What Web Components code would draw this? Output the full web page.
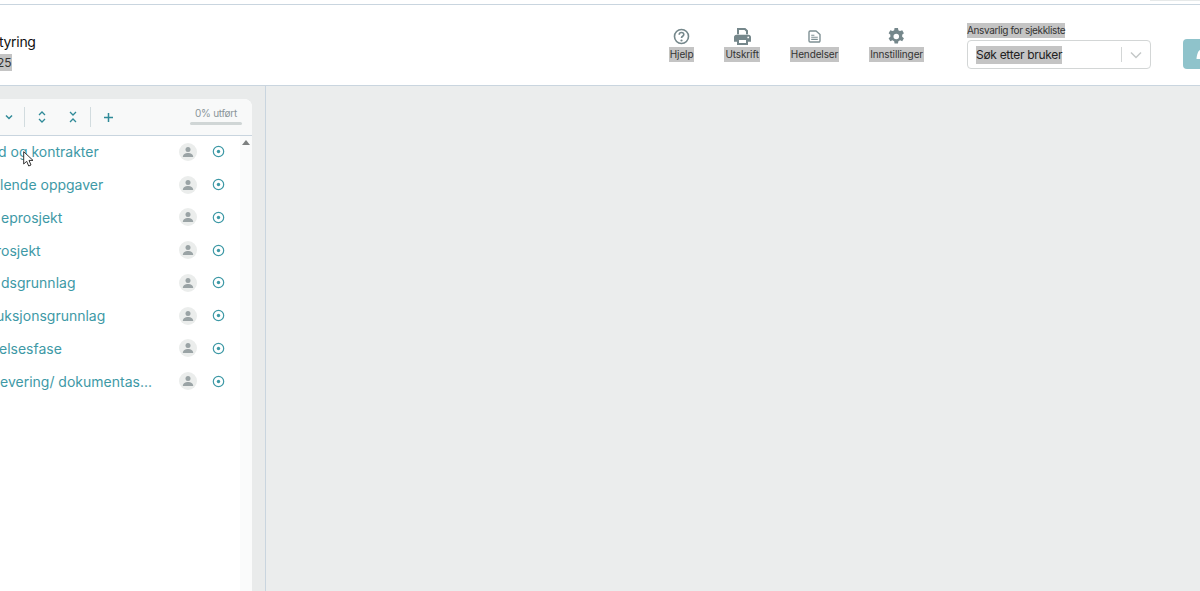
<!DOCTYPE html>
<html lang="no">
<head>
<meta charset="utf-8">
<title>Sjekkliste</title>
<style>
  html, body { margin: 0; height: 100%; overflow: hidden; background: #fff; }
  body { font-family: Inter, "Liberation Sans", sans-serif; }
</style>
</head>
<body>
<checklist-app>
  <app-header slot="header">
    <span slot="title">tyring</span>
    <span slot="sub">25</span>
    <header-action label="Hjelp" icon="help"></header-action>
    <header-action label="Utskrift" icon="print"></header-action>
    <header-action label="Hendelser" icon="doc"></header-action>
    <header-action label="Innstillinger" icon="gear"></header-action>
  </app-header>
  <check-panel slot="panel">
    <check-row style="--indent:-2px">d og kontrakter</check-row>
    <check-row>lende oppgaver</check-row>
    <check-row style="--indent:1px">eprosjekt</check-row>
    <check-row style="--indent:-4px">rosjekt</check-row>
    <check-row style="--indent:1px">dsgrunnlag</check-row>
    <check-row style="--indent:-4px">uksjonsgrunnlag</check-row>
    <check-row style="--indent:-1px">elsesfase</check-row>
    <check-row>evering/ dokumentas...</check-row>
  </check-panel>
</checklist-app>

<script>
// Small helper, every component just sets its shadow markup once
var makeShadow = (el, html) => {
  el.attachShadow({ mode: 'open' });
  el.shadowRoot.innerHTML = html;
};

const ICONS = {
  help: `<svg width="17" height="17" viewBox="0 0 17 17" fill="none"><circle cx="8.5" cy="8.5" r="7" stroke="#75878b" stroke-width="1.6"/><path d="M6.2 6.7c0-1.400 1-2.200 2.300-2.200s2.300.8 2.300 2.100c0 1.700-2.300 1.600-2.300 3.300" stroke="#75878b" stroke-width="1.6"/><circle cx="8.500" cy="12.500" r="1.100" fill="#75878b"/></svg>`,
  print: `<svg width="17" height="17" viewBox="0 0 17 17"><path fill="#75878b" d="M3 0h8.300L14 2.600V6.200h-2V3.400L10.500 2H5v4.200H3zM2.400 6.800h12.200c1.300 0 2.400 1 2.400 2.300v4.600h-3V17H3v-3.300H0V9.100c0-1.300 1.100-2.300 2.400-2.300zM5 12v3h7v-3zM14.200 8.500a.9.9 0 1 0 0 1.800.9.9 0 0 0 0-1.800z"/></svg>`,
  doc: `<svg width="17" height="17" viewBox="0 0 17 17" fill="none"><path d="M3 4.200a1.200 1.200 0 0 1 1.200-1.200h5.900l3.900 3.600v6.200a1.200 1.200 0 0 1-1.200 1.200H4.200A1.200 1.200 0 0 1 3 12.800z" stroke="#7f9094" stroke-width="1.400" stroke-linejoin="round"/><path d="M5.200 7.200h3.200M5.200 9.300h6.600M5.200 11.400h6.600" stroke="#7f9094" stroke-width="1.100"/></svg>`,
  gear: `<svg width="17" height="17" viewBox="1 1 22 22"><path fill="#75878b" fill-rule="evenodd" d="M9.800 0.800h4.400l.5 3c.8.300 1.500.700 2.200 1.200l2.800-1.100 2.200 3.900-2.300 1.900a8.500 8.500 0 0 1 0 2.600l2.300 1.900-2.200 3.900-2.800-1.100c-.7.500-1.400.9-2.200 1.200l-.5 3H9.800l-.5-3c-.8-.3-1.500-.7-2.200-1.200l-2.800 1.100-2.200-3.900 2.300-1.900a8.500 8.500 0 0 1 0-2.600L2.100 7.800l2.200-3.900 2.800 1.100c.7-.5 1.400-.9 2.200-1.200zM12 15.600a3.600 3.600 0 1 0 0-7.200 3.600 3.600 0 0 0 0 7.200z" transform="translate(-.3 0)"/></svg>`
};

class ChecklistApp extends HTMLElement {
  constructor() {
    super();
    makeShadow(this, `
      <style>
        :host { display: flex; flex-direction: column; height: 591px; background: #ebeded; }
        .topstrip { height: 4px; background: #fff; border-bottom: 1px solid #c9d5df; flex: none; display: flex; justify-content: flex-end; }
        .topstrip i { display: block; width: 50px; height: 1px; background: #e6e9e9; }
        .body { flex: 1; display: flex; min-height: 0; }
        .side { width: 266px; flex: none; box-sizing: border-box; background: #e9ebeb;
                border-right: 1px solid #c9d5df; padding: 13px 13px 0 0; display: flex; }
        .main { flex: 1; background: #ebeded; }
      </style>
      <div class="topstrip"><i></i></div>
      <slot name="header"></slot>
      <div class="body">
        <div class="side"><slot name="panel"></slot></div>
        <div class="main"></div>
      </div>`);
  }
}
customElements.define('checklist-app', ChecklistApp);

class AppHeader extends HTMLElement {
  constructor() {
    super();
    makeShadow(this, `
      <style>
        :host { display: flex; align-items: center; height: 81px; box-sizing: border-box;
                background: #fff; border-bottom: 1px solid #c9d5df; flex: none; overflow: hidden; }
        .title { align-self: flex-start; padding-top: 28px; display: flex; flex-direction: column; color: #111; }
        .t { font-size: 14px; line-height: 18px; letter-spacing: -0.3px; text-indent: -1px; }
        .s { font-size: 12px; line-height: 17px; color: #333; background: #c4c4c4; width: 12px; margin-top: 3px;
             text-indent: -3px; overflow: hidden; }
        .actions { margin-left: auto; display: flex; align-items: center; gap: 30px; }
        .resp { margin-left: 43px; padding-top: 2px; display: flex; flex-direction: column; font-size: 10px; color: #333; }
        .resp label { background: #c4c4c4; align-self: flex-start; line-height: 15px; letter-spacing: -0.35px; }
        .select { width: 184px; height: 29px; box-sizing: border-box; margin-top: 2px; border: 1px solid #d3d6d6;
                  border-radius: 4px; display: flex; align-items: center; padding-left: 8px; }
        .select span { background: #c4c4c4; font-size: 12px; line-height: 18px; color: #222; letter-spacing: -0.3px; }
        .select i { margin-left: auto; width: 1px; height: 15px; background: #d3d6d6; }
        .select svg { margin: 0 8px; }
        .btn { margin-left: 32px; width: 17px; height: 30px; align-self: flex-start; margin-top: 34px; background: #8fc3cb;
               border-radius: 4px 0 0 4px; overflow: hidden; }
        .btn svg { display: block; }
      </style>
      <div class="title">
        <div class="t"><slot name="title"></slot></div>
        <div class="s"><slot name="sub"></slot></div>
      </div>
      <div class="actions"><slot></slot></div>
      <div class="resp">
        <label>Ansvarlig for sjekkliste</label>
        <div class="select"><span>Søk etter bruker</span><i></i>
          <svg width="12" height="8" viewBox="0 0 12 8" fill="none"><path d="M1 1.500l5 5 5-5" stroke="#c4c8c8" stroke-width="1.500"/></svg>
        </div>
      </div>
      <div class="btn"><svg width="17" height="30" viewBox="0 0 17 30"><path d="M13.500 20c.3-4 1.300-8 3.500-9v9z" fill="#fff"/></svg></div>`);
  }
}
customElements.define('app-header', AppHeader);

class HeaderAction extends HTMLElement {
  constructor() {
    super();
    makeShadow(this, `
      <style>
        :host { display: flex; flex-direction: column; align-items: center; gap: 2px; font-size: 10px; color: #333; }
        svg { display: block; }
        span { background: #c4c4c4; line-height: 15px; padding: 0 1px; letter-spacing: -0.12px; }
      </style>
      ${ICONS[this.getAttribute('icon')]}
      <span>${this.getAttribute('label')}</span>`);
  }
}
customElements.define('header-action', HeaderAction);

class CheckPanel extends HTMLElement {
  constructor() {
    super();
    makeShadow(this, `
      <style>
        :host { position: relative; display: flex; flex-direction: column; width: 252px; background: #fff; border-radius: 0 8px 0 0; overflow: hidden; }
        .bar { height: 36px; flex: none; background: #f8f9f9; border-bottom: 1px solid #c9d5df; display: flex; align-items: center; }
        .bar svg { display: block; flex: none; }
        .sep { width: 1px; height: 20px; background: #d2dcdf; flex: none; }
        .progress { margin-left: auto; margin-right: 10px; margin-bottom: 3px; width: 52px; display: flex; flex-direction: column; align-items: center; gap: 2px;
                    font-size: 10px; color: #8a9699; line-height: 14px; letter-spacing: -0.3px; }
        .progress i { display: block; width: 100%; height: 3px; border-radius: 2px; background: #d0d6d6; }
        .wrap { flex: 1; display: flex; min-height: 0; }
        .list { flex: 1; margin-top: -0.5px; }
        .scroll { width: 12px; flex: none; background: #fafbfb; display: flex; justify-content: center; padding-top: 4px; box-sizing: border-box; }
        .scroll svg { display: block; }
        .cursor { position: absolute; left: 23px; top: 52px; }
      </style>
      <div class="bar">
        <svg style="margin-left:5px" width="8" height="6" viewBox="0 0 8 6" fill="none"><path d="M1 1.500l3 3 3-3" stroke="#2f8a98" stroke-width="1.500"/></svg>
        <span class="sep" style="margin-left:11px"></span>
        <svg style="margin-left:13px" width="8" height="12" viewBox="0 0 8 12" fill="none"><path d="M1 4l3-3 3 3M1 8l3 3 3-3" stroke="#2f8a98" stroke-width="1.300"/></svg>
        <svg style="margin-left:23px" width="8" height="12" viewBox="0 0 8 12" fill="none"><path d="M1 1l3 3 3-3M1 11l3-3 3 3" stroke="#2f8a98" stroke-width="1.300"/></svg>
        <span class="sep" style="margin-left:13px"></span>
        <svg style="margin-left:13px" width="9" height="9" viewBox="0 0 9 9" fill="none"><path d="M4.500 0v9M0 4.500h9" stroke="#2f8a98" stroke-width="1.500"/></svg>
        <div class="progress">0% utført<i></i></div>
      </div>
      <div class="wrap">
        <div class="list"><slot></slot></div>
        <div class="scroll"><svg width="8" height="5" viewBox="0 0 8 5"><path d="M4 0l4 5H0z" fill="#7d8080"/></svg></div>
      </div>
      <svg class="cursor" width="11" height="17" viewBox="0 0 11 17"><path d="M.7.700v12.300l3-2.700 2 4.700 2.300-1-2-4.600h4z" fill="#fff" stroke="#333" stroke-width="1"/></svg>`);
  }
}
customElements.define('check-panel', CheckPanel);

class CheckRow extends HTMLElement {
  constructor() {
    super();
    makeShadow(this, `
      <style>
        :host { display: flex; align-items: center; height: 32.75px; font-size: 14px; color: #3e99a6; }
        .name { flex: 1; white-space: nowrap; overflow: hidden; text-indent: var(--indent, 0); }
        .avatar { width: 18px; height: 18px; border-radius: 50%; background: #ebedec; display: flex; align-items: center; justify-content: center; }
        .target { margin: 0 15px 0 15px; display: block; }
      </style>
      <span class="name"><slot></slot></span>
      <span class="avatar"><svg width="12" height="12" viewBox="0 0 12 12"><circle cx="6" cy="3.500" r="2.500" fill="#9aa3a5"/><path d="M.8 11c0-2.600 2.600-4 5.200-4s5.200 1.400 5.200 4z" fill="#9aa3a5"/></svg></span>
      <svg class="target" width="13" height="13" viewBox="0 0 13 13" fill="none"><circle cx="6.500" cy="6.500" r="5.200" stroke="#3e99a6" stroke-width="1.200"/><circle cx="6.500" cy="6.500" r="1.700" fill="#3e99a6"/></svg>`);
  }
}
customElements.define('check-row', CheckRow);
</script>
</body>
</html>
